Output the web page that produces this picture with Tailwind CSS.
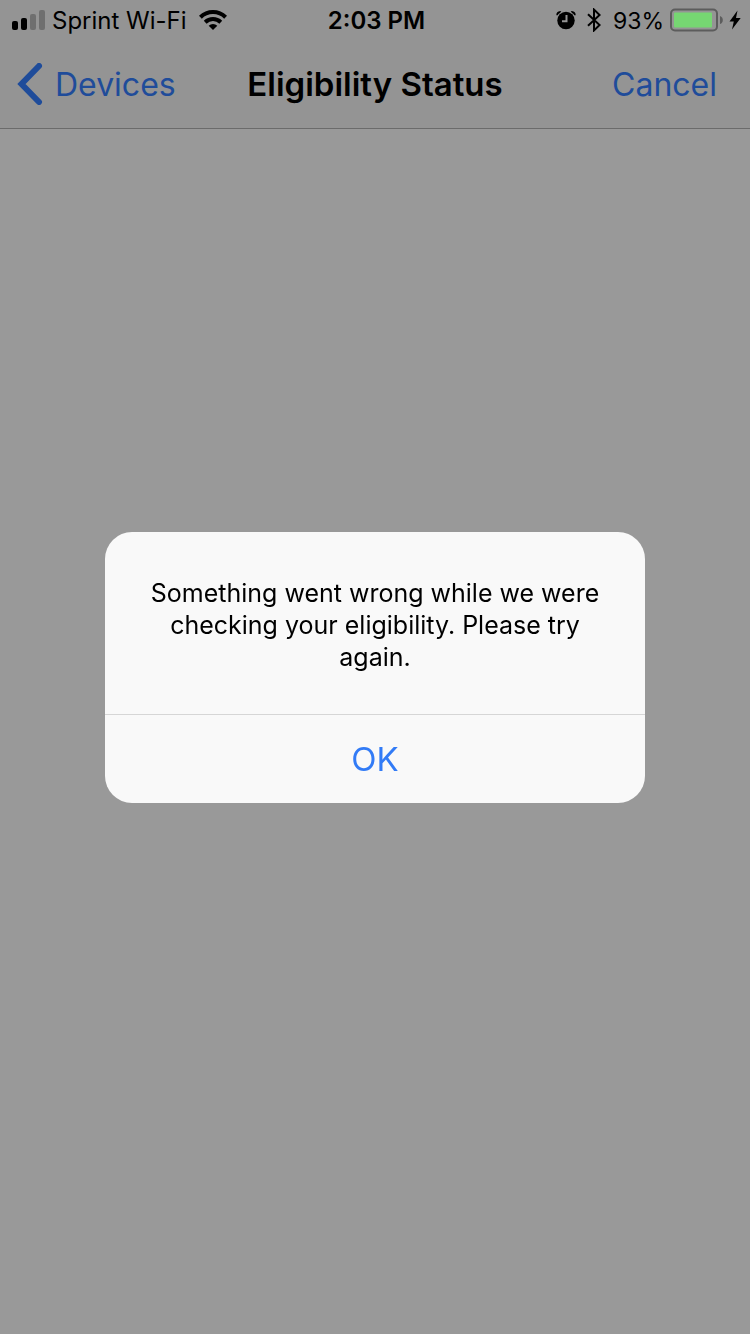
<!DOCTYPE html>
<html lang="en">
<head>
  <meta charset="UTF-8" />
  <meta name="viewport" content="width=device-width, initial-scale=1.0" />
  <title>Eligibility Status</title>
  <script src="https://cdn.jsdelivr.net/npm/@tailwindcss/browser@4"></script>
</head>
<body class="min-h-screen bg-[#999999] text-black font-['Inter',sans-serif]">
  <!-- Header -->
  <header class="bg-[#949494] border-b border-[#6b6b6b]">
    <!-- Status bar -->
    <div class="grid grid-cols-[1fr_auto_1fr] items-center h-10 pl-3 pr-[9px] text-2xl leading-8">
      <div class="flex items-center">
        <svg class="w-[34px] h-5 mr-[6px]" viewBox="0 0 34 20" aria-hidden="true">
          <rect x="0" y="11" width="6" height="9" rx="2" />
          <rect x="9" y="8" width="6" height="12" rx="2" />
          <rect x="18" y="4" width="6" height="16" rx="2" fill="#6f6f6f" />
          <rect x="27" y="0" width="6" height="20" rx="2" fill="#6f6f6f" />
        </svg>
        <span class="pt-0.5">Sprint Wi-Fi</span>
        <svg class="w-7 h-5 ml-3" viewBox="0 0 28 20" aria-hidden="true">
          <g fill="none" stroke="#000" stroke-width="4">
            <path d="M1.4 7.2a18 18 0 0 1 25.2 0" />
            <path d="M6.2 12.2a11.2 11.2 0 0 1 15.6 0" />
          </g>
          <path d="M14 20l-4.300-4.300a6.200 6.200 0 0 1 8.600 0z" />
        </svg>
      </div>
      <time class="pt-0.5 font-semibold">2:03 PM</time>
      <div class="flex items-center justify-end">
        <svg class="w-5 h-5 mr-[11px]" viewBox="0 0 20 20" aria-hidden="true">
          <circle cx="10" cy="10.500" r="8.700" />
          <path d="M.3 5.200Q.3 1 5.300 1L4 3Q2 4 1.700 5.200zM19.700 5.200Q19.700 1 14.700 1L16 3Q18 4 18.300 5.200z" />
          <path d="M10.500 5v6.200H6" fill="none" stroke="#949494" stroke-width="2" />
        </svg>
        <svg class="w-[14px] h-6 mr-3" viewBox="0 0 14 24" aria-hidden="true">
          <path d="M1 6.200l11.600 10.800L7 22.400V1.600L12.600 7 1 17.800" fill="none" stroke="#000" stroke-width="2" />
        </svg>
        <span class="pt-0.5 text-[23px]">93%</span>
        <svg class="w-[53px] h-6 ml-[6px] mr-[6px]" viewBox="0 0 53 24" aria-hidden="true">
          <rect x="1" y="1.500" width="46" height="21" rx="4" fill="none" stroke="#5c5c5c" stroke-width="2" />
          <rect x="4" y="4.500" width="38" height="15" rx="1" fill="#76d672" />
          <path d="M50 8q2.800 1 2.800 4T50 16z" fill="#5c5c5c" />
        </svg>
        <svg class="w-3 h-5" viewBox="0 0 12 20" aria-hidden="true">
          <path d="M8.500.5L.5 11.500h4.300L3 19.500l8.700-11.400H7z" />
        </svg>
      </div>
    </div>

    <!-- Navigation bar -->
    <nav class="grid grid-cols-[1fr_auto_1fr] items-center h-22 px-[17px] text-[33px]">
      <button type="button" class="flex items-center justify-self-start text-[32px] text-[#1f4c9a]">
        <svg class="w-[26px] h-[42px] mr-3" viewBox="0 0 26 42" aria-hidden="true">
          <path d="M22 3L4.500 21 22 39" fill="none" stroke="currentColor" stroke-width="6" stroke-linecap="round" stroke-linejoin="miter" />
        </svg>
        <span class="pt-0.5">Devices</span>
      </button>
      <h1 class="pt-0.5 font-semibold">Eligibility Status</h1>
      <button type="button" class="mr-4 pt-0.5 justify-self-end text-[32px] text-[#1f4c9a]">Cancel</button>
    </nav>
  </header>

  <!-- Alert -->
  <div class="fixed inset-0 flex items-center justify-center pt-px">
    <div role="alertdialog" aria-modal="true" aria-describedby="message" class="w-[72%] bg-[#f9f9f9] rounded-[27px] overflow-hidden">
      <p id="message" class="px-8 pt-[45px] pb-[41px] text-center text-[25px] leading-8">Something went wrong while we were checking your eligibility. Please try again.</p>
      <button type="button" class="block w-full h-[89px] pt-0.5 border-t border-[#d6d6d6] text-[33px] text-[#327bf6]">OK</button>
    </div>
  </div>
</body>
</html>
